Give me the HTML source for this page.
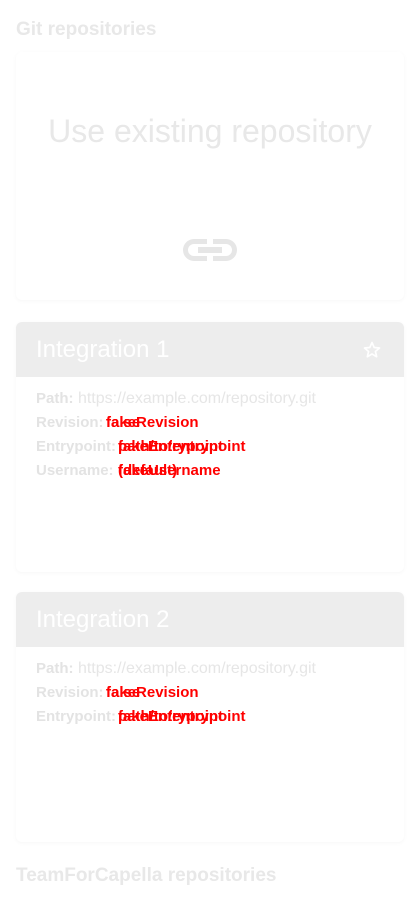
<!DOCTYPE html>
<html><head><style>
body{margin:0;width:420px;height:920px;background:#fff;font-family:"Liberation Sans",sans-serif;overflow:hidden;position:relative}
.h{position:absolute;left:16px;font-size:19px;font-weight:bold;color:#e8e8e8}
.card{position:absolute;left:16px;width:388px;background:#fff;border-radius:6px;box-shadow:0 1px 4px rgba(0,0,0,0.04);overflow:hidden}
.hd{height:55px;background:#ededed;color:#fff;font-size:24px;line-height:56px;padding-left:20px;position:relative}
.row{position:absolute;left:20px;font-size:16px;color:#e6e6e6;white-space:nowrap}
.row b{color:#e3e3e3;font-size:15px}
.r{position:absolute;top:0;color:#f00;font-size:15px;font-weight:bold}
</style></head><body>
<div class="h" style="top:19px">Git repositories</div>
<div class="card" style="top:52px;height:248px">
 <div style="position:absolute;top:61px;width:100%;text-align:center;font-size:32px;color:#e8e8e8">Use existing repository</div>
 <svg style="position:absolute;left:164px;top:182px" width="60" height="32" viewBox="0 0 60 30"><path d="M27 4H14a11 11 0 0 0 0 22h13v-5H14a6 6 0 0 1 0-12h13zM33 4h13a11 11 0 0 1 0 22H33v-5h13a6 6 0 0 0 0-12H33zM18 12h24v6H18z" fill="#e6e6e6"/></svg>
</div>
<div class="card" style="top:322px;height:250px">
 <div class="hd">Integration 1<svg style="position:absolute;right:22px;top:18px" width="20" height="20" viewBox="0 0 24 24"><path d="M12 3l2.6 6 6.4.6-4.9 4.2 1.5 6.3L12 16.8 6.4 20.1l1.5-6.3L3 9.6 9.4 9z" fill="none" stroke="#fff" stroke-width="2" stroke-linejoin="round"/></svg></div>
 <div class="row" style="top:68px"><b>Path:</b> https://example.com/repository.git</div>
 <div class="row" style="top:92px"><b>Revision:</b><span class="r" style="left:70px">false</span><span class="r" style="left:70px">fakeRevision</span></div>
 <div class="row" style="top:116px"><b>Entrypoint:</b><span class="r" style="left:82px">path/to/entrypoint</span><span class="r" style="left:82px">fakeEntrypoint</span></div>
 <div class="row" style="top:140px"><b>Username:</b><span class="r" style="left:82px">fakeUsername</span><span class="r" style="left:82px">(default)</span></div>
</div>
<div class="card" style="top:592px;height:250px">
 <div class="hd">Integration 2</div>
 <div class="row" style="top:68px"><b>Path:</b> https://example.com/repository.git</div>
 <div class="row" style="top:92px"><b>Revision:</b><span class="r" style="left:70px">false</span><span class="r" style="left:70px">fakeRevision</span></div>
 <div class="row" style="top:116px"><b>Entrypoint:</b><span class="r" style="left:82px">path/to/entrypoint</span><span class="r" style="left:82px">fakeEntrypoint</span></div>
</div>
<div class="h" style="top:865px">TeamForCapella repositories</div>
</body></html>
